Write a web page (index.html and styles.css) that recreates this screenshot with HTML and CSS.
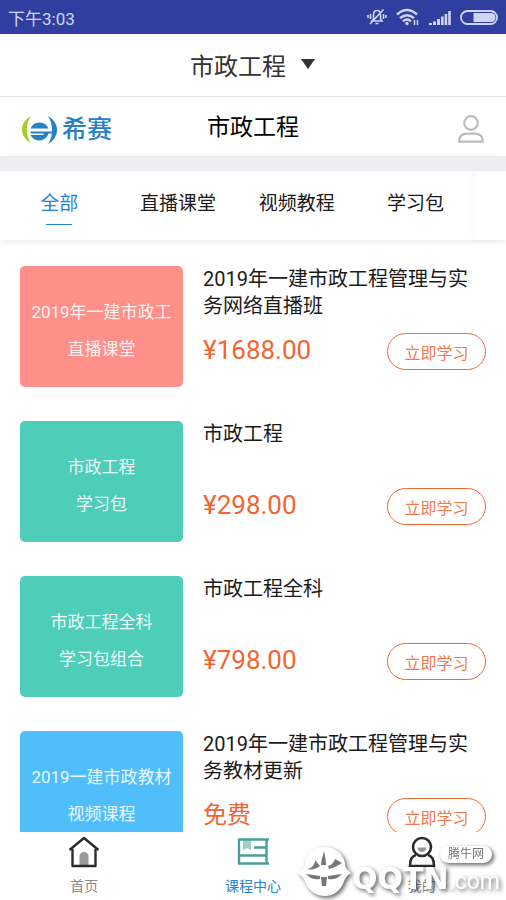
FILE: index.html
```html
<!DOCTYPE html>
<html lang="zh-CN">
<head>
<meta charset="utf-8">
<meta name="viewport" content="width=device-width, initial-scale=1">
<title>市政工程</title>
<link rel="stylesheet" href="styles.css">
</head>
<body>
<div class="status">
  <span>下午3:03</span>
  <div class="status-icons">
    <svg width="20" height="18" viewBox="0 0 20 18" fill="none" stroke="currentColor" stroke-width="1.6"><path d="M5 13h10l-1.500-2V7c0-3-1.500-4.500-3.500-4.500S6.500 4 6.500 7v4zM8.500 15.500h3M3 16 16.500 1.500M3.500 6v5M1 7v3M16.500 6v5M19 7v3"/></svg>
    <svg width="24" height="18" viewBox="0 0 24 18" fill="none" stroke="currentColor" stroke-width="2.400"><path d="M1 6.500q10-9 20 0M4 10.200q7-6 14 0M7 13.300q4-3.500 8 0"/><circle cx="11" cy="15.500" r="1.700" fill="currentColor" stroke="none"/><path d="M18.500 12v5M21.500 12v5" stroke-width="1.500"/></svg>
    <svg width="22" height="16" viewBox="0 0 22 16" fill="currentColor"><path d="M0 14h3v2H0zM4 12.500h3V16H4zM8 10h3v6H8zM12 7.500h2.600V16H12zM15.600 5h2.600v11h-2.600zM19.200 2h2.600v14h-2.600z"/></svg>
    <svg width="38" height="15" viewBox="0 0 38 15"><rect x="1" y="1" width="36" height="13" rx="6.500" fill="none" stroke="currentColor" stroke-width="1.800"/><path d="M13.500 3H31a4.500 4.500 0 0 1 0 9H13.500z" fill="currentColor"/></svg>
  </div>
</div>
<button class="subject" type="button">市政工程<svg width="16" height="12" viewBox="0 0 16 12"><path d="M1 1h14L8 11z" fill="#333"/></svg></button>
<header class="header">
  <a class="logo" href="#">
    <svg width="36" height="30" viewBox="1 0 36 30"><path d="M10 1C-2 7-2 22 10 28C4.500 21 4.500 8 10 1z" fill="#a9cc2c"/><path d="M27 1c12 7 12 21 0 28 5.500-8 5.500-20 0-28z" fill="#2580c4"/><path d="M9.500 13.500a9.700 9.700 0 0 1 18 0zM9.500 16.500H35v2h-7.500a9.700 9.700 0 0 1-18 1.500h13v-1.500h-13z" fill="#2580c4"/></svg>
    <span>希赛</span>
  </a>
  <h1>市政工程</h1>
  <button class="user" type="button" aria-label="个人中心"><svg width="26" height="28" viewBox="0 0 26 28" fill="none" stroke="#bcbcbc" stroke-width="2.200"><circle cx="13" cy="8" r="6.800"/><path d="M1.200 26.700c0-6 3.800-8 7.800-8h8c4 0 7.800 2 7.800 8z"/></svg></button>
</header>
<nav class="tabs">
  <div class="tab-list">
    <a class="tab active" href="#">全部</a>
    <a class="tab" href="#">直播课堂</a>
    <a class="tab" href="#">视频教程</a>
    <a class="tab" href="#">学习包</a>
  </div>
  <div class="tab-more"></div>
</nav>
<main class="courses">
  <article class="course">
    <div class="thumb coral"><span>2019年一建市政工</span><span>直播课堂</span></div>
    <div class="info"><h2>2019年一建市政工程管理与实务网络直播班</h2><div class="buy"><span class="price">¥1688.00</span><button type="button">立即学习</button></div></div>
  </article>
  <article class="course">
    <div class="thumb teal"><span>市政工程</span><span>学习包</span></div>
    <div class="info"><h2>市政工程</h2><div class="buy"><span class="price">¥298.00</span><button type="button">立即学习</button></div></div>
  </article>
  <article class="course">
    <div class="thumb teal"><span>市政工程全科</span><span>学习包组合</span></div>
    <div class="info"><h2>市政工程全科</h2><div class="buy"><span class="price">¥798.00</span><button type="button">立即学习</button></div></div>
  </article>
  <article class="course">
    <div class="thumb blue"><span>2019一建市政教材</span><span>视频课程</span></div>
    <div class="info"><h2>2019年一建市政工程管理与实务教材更新</h2><div class="buy"><span class="price free">免费</span><button type="button">立即学习</button></div></div>
  </article>
</main>
<footer class="bottom">
  <a href="#"><svg width="32" height="32" viewBox="0 0 32 32"><path d="M11.500 30V20.500a4.500 4.500 0 0 1 9 0V30z" fill="#999"/><path d="M1.500 14 16 2l14.500 12M4.500 13v17h23V13" fill="none" stroke="#2b2b2b" stroke-width="2.400" stroke-linejoin="round"/></svg>首页</a>
  <a class="current" href="#"><svg width="32" height="32" viewBox="0 0 32 32"><path d="M6 4h8v10l-4-2-4 2z" fill="#9dccc9"/><path d="M32 3.500H2v24h30M29.500 3.500v24M17 11.500h13M2 19.500h28" fill="none" stroke="#47a09c" stroke-width="2.400"/></svg>课程中心</a>
  <a href="#"><svg width="32" height="32" viewBox="0 0 32 32"><circle cx="16" cy="11" r="9" fill="none" stroke="#2b2b2b" stroke-width="2.600"/><path d="M11.500 11.500h9a4.500 4.500 0 0 1-9 0z" fill="#999"/><path d="M10 19c-4 1-6 5-6 11h24c0-6-2-10-6-11" fill="none" stroke="#2b2b2b" stroke-width="2.600"/></svg>我的</a>
</footer>
<div class="watermark">
  <svg width="56" height="52" viewBox="0 0 56 52"><path d="M9 18C9 7 17 1 28 1s19 6 21 16c0 5 2 6 6 10-5 3-6 6-8 11-4 8-10 12-18 12S14 46 10 38C8 32 5 30 1 26c6-2 8-4 8-8z" fill="#fff"/><path d="M28 5c-1 5-3 9-3 14h5c0-5-1-9-2-14zM19 14c0 5-3 8-8 9 5 1 9 0 13-3zM39 13c-1 3-3 6-7 7l1 3c5-1 8-3 13-6zM10 28l14 2v3c-5 1-9 0-14-5zM46 28l-14 2v3c5 1 9 0 14-5zM25 31h6l-1 9h-4z" fill="#777"/></svg>
  <div class="mark-text"><span class="mark-tag">腾牛网</span><span class="mark-name">QQTN<small>.com</small></span></div>
</div>
</body>
</html>
```
FILE: styles.css
```css
* { box-sizing: border-box; }
body {
  margin: 0;
  height: 100vh;
  display: flex;
  flex-direction: column;
  position: relative;
  overflow: hidden;
  background: #fff;
  color: #1a1a1a;
  font-family: Roboto, "Noto Sans CJK SC", sans-serif;
  font-weight: 400;
}
button { font: inherit; background: none; border: 0; padding: 0; }
a { color: inherit; text-decoration: none; }
h1, h2 { margin: 0; font-weight: inherit; }
svg { display: block; flex: none; }
.status {
  flex: none;
  height: 34px;
  padding: 0 8px;
  display: flex;
  align-items: center;
  justify-content: space-between;
  background: #303f9f;
  color: #d0d5f5;
  font-size: 17px;
}
.status-icons { display: flex; align-items: center; gap: 9px; }
.subject {
  flex: none;
  height: 63px;
  padding-bottom: 2px;
  display: flex;
  align-items: center;
  justify-content: center;
  gap: 14px;
  border-bottom: 1px solid #e4e4e4;
  font-size: 24px;
  color: #333;
}
.header {
  flex: none;
  height: 59px;
  padding: 0 22px;
  display: grid;
  grid-template-columns: 1fr auto 1fr;
  align-items: center;
}
.header h1 { padding-bottom: 3px; font-size: 23px; color: #000; }
.logo {
  display: flex;
  align-items: center;
  gap: 4px;
  padding-top: 6px;
  color: #2580c4;
  font-size: 25px;
  font-weight: 500;
  line-height: 30px;
}
.user { justify-self: end; padding-top: 4px; }
.tabs {
  flex: none;
  display: flex;
  height: 84px;
  border-top: 15px solid #ededf2;
  box-shadow: 0 2px 6px rgba(0, 0, 0, 0.08);
}
.tab-list { flex: 1; display: flex; }
.tab-more { width: 31px; box-shadow: -2px 0 5px rgba(0, 0, 0, 0.03); }
.tab {
  flex: 1;
  display: flex;
  flex-direction: column;
  align-items: center;
  padding-top: 19px;
  font-size: 19px;
  line-height: 28px;
}
.tab.active { color: #1c84d8; }
.tab.active::after {
  content: "";
  width: 26px;
  height: 1px;
  margin-top: 6px;
  background: #1c84d8;
}
.courses {
  flex: 1;
  min-height: 0;
  overflow: hidden;
  padding: 26px 20px 0;
  display: flex;
  flex-direction: column;
  gap: 34px;
}
.course { flex: none; display: grid; grid-template-columns: 163px 1fr; gap: 20px; }
.thumb {
  height: 121px;
  padding: 28px 10px 0;
  border-radius: 5px;
  color: rgba(255, 255, 255, 0.9);
  font-size: 17px;
  line-height: 37px;
  text-align: center;
}
.thumb span { display: block; overflow: hidden; white-space: nowrap; }
.coral { background: #ff9089; }
.teal { background: #4ecdb9; }
.blue { background: #4fbefa; }
.info h2 { min-height: 54px; font-size: 20px; line-height: 27px; }
.buy { display: flex; justify-content: space-between; margin-top: 13px; }
.price { color: #f26531; font-size: 26px; line-height: 34px; }
.price.free { font-size: 24px; }
.buy button {
  width: 99px;
  height: 37px;
  border: 1px solid #ee6a38;
  border-radius: 19px;
  color: #f07a4c;
  font-size: 16px;
}
.bottom { flex: none; height: 68px; display: flex; }
.bottom a {
  flex: 1;
  display: flex;
  flex-direction: column;
  align-items: center;
  gap: 9px;
  padding-top: 4px;
  color: #888;
  font-size: 14px;
  line-height: 18px;
}
.bottom .current { color: #2a86d0; }
.watermark {
  position: absolute;
  right: 6px;
  bottom: 2px;
  display: flex;
  align-items: flex-end;
  color: #fff;
  filter: drop-shadow(2px 2px 2px rgba(0, 0, 0, 0.6));
}
.mark-text { display: flex; flex-direction: column; align-items: flex-end; }
.mark-tag {
  margin-right: 8px;
  padding: 0 8px;
  border-radius: 9px;
  background: #fff;
  color: #777;
  font-size: 12px;
  line-height: 17px;
}
.mark-name { font-family: "DejaVu Sans", sans-serif; font-size: 30px; line-height: 32px; font-weight: 700; }
.mark-name small { font-family: Roboto, sans-serif; font-size: 23px; font-weight: 400; }
```
